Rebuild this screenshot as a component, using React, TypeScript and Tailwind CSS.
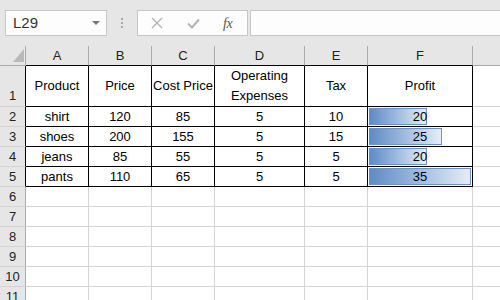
import React from "react";

const cols = [
  { key: "A", w: "w-[63px]" },
  { key: "B", w: "w-[63px]" },
  { key: "C", w: "w-[63px]" },
  { key: "D", w: "w-[90px]" },
  { key: "E", w: "w-[63px]" },
  { key: "F", w: "w-[105px]" },
];

const rows = [
  ["shirt", "120", "85", "5", "10", 20],
  ["shoes", "200", "155", "5", "15", 25],
  ["jeans", "85", "55", "5", "5", 20],
  ["pants", "110", "65", "5", "5", 35],
] as const;

const maxProfit = 35;

function FormulaBar() {
  return (
    <div className="h-[46px] bg-[#e6e6e6] flex items-start pt-[10px]">
      {/* name box */}
      <div className="ml-[5px] w-[102px] h-[26px] border border-[#c6c6c6] bg-[#fdfdfd] flex items-center justify-between pl-[7px] pr-[6px]">
        <span className="text-[15px] text-[#333]">L29</span>
        <span className="w-0 h-0 border-l-[4px] border-r-[4px] border-t-[4px] border-l-transparent border-r-transparent border-t-[#777]" />
      </div>
      {/* dots */}
      <div className="w-[30px] h-[26px] flex flex-col items-center justify-center gap-[2px]">
        <span className="w-[2px] h-[2px] bg-[#a8a8a8]" />
        <span className="w-[2px] h-[2px] bg-[#a8a8a8]" />
        <span className="w-[2px] h-[2px] bg-[#a8a8a8]" />
      </div>
      {/* buttons */}
      <div className="w-[111px] h-[26px] border border-[#c6c6c6] bg-[#fdfdfd] flex items-center">
        <svg width="12" height="12" viewBox="0 0 12 12" className="ml-[13px]">
          <path d="M1 1 L11 11 M11 1 L1 11" stroke="#b4b4b4" strokeWidth="1.3" fill="none" />
        </svg>
        <svg width="13" height="11" viewBox="0 0 13 11" className="ml-[24px]">
          <path d="M1 5.5 L5 9.5 L12 1.5" stroke="#b4b4b4" strokeWidth="2" fill="none" />
        </svg>
        <span className="ml-[23px] text-[14px] italic text-[#555] font-['Liberation_Serif',serif] tracking-[-0.5px]">fx</span>
      </div>
      {/* formula input */}
      <div className="ml-[2px] flex-1 h-[26px] border border-r-0 border-[#c6c6c6] bg-[#fdfdfd]" />
    </div>
  );
}

function HeaderRow() {
  return (
    <div className="flex h-[20px]">
      <div className="w-[26px] shrink-0 bg-[#e6e6e6] border-r border-b border-[#ababab] relative">
        <span className="absolute left-[13px] top-[3px] w-0 h-0 border-l-[10px] border-t-[12px] border-l-transparent border-t-transparent border-b-0 border-r-0" />
        <svg width="11" height="13" viewBox="0 0 11 13" className="absolute left-[13px] top-[3px]">
          <path d="M11 0 L11 13 L0 13 Z" fill="#b9b9b9" />
        </svg>
      </div>
      {cols.map((c) => (
        <div
          key={c.key}
          className={`${c.w} shrink-0 bg-[#e6e6e6] border-r border-r-[#ababab] border-b border-b-black flex items-center justify-center text-[#222] pt-[1px]`}
        >
          {c.key}
        </div>
      ))}
      <div className="flex-1 bg-[#e6e6e6] border-b border-[#ababab]" />
    </div>
  );
}

function RowHeader({ n, tall, black }: { n: number; tall?: boolean; black?: boolean }) {
  return (
    <div
      className={`w-[26px] shrink-0 bg-[#e6e6e6] border-b border-b-[#d4d4d4] border-r ${
        black ? "border-r-black" : "border-r-[#ababab]"
      } flex justify-center text-[#222] ${tall ? "items-end pb-[1px]" : "items-center"}`}
    >
      {n}
    </div>
  );
}

export default function App() {
  return (
    <div className="w-[500px] h-[300px] overflow-hidden bg-white font-['Liberation_Sans',Arial,sans-serif] text-[13px] text-black">
      <FormulaBar />
      <HeaderRow />

      {/* row 1: headers */}
      <div className="flex h-[41px]">
        <RowHeader n={1} tall black />
        {["Product", "Price", "Cost Price", "Operating Expenses", "Tax", "Profit"].map((t, i) => (
          <div
            key={t}
            className={`${cols[i].w} shrink-0 border-r border-b border-black flex items-center justify-center text-center leading-[20px] whitespace-nowrap overflow-hidden`}
          >
            {t === "Operating Expenses" ? (
              <span>
                Operating
                <br />
                Expenses
              </span>
            ) : (
              t
            )}
          </div>
        ))}
        <div className="flex-1 border-b border-[#d4d4d4]" />
      </div>

      {/* data rows */}
      {rows.map((r, ri) => (
        <div key={ri} className="flex h-[20px]">
          <RowHeader n={ri + 2} black />
          {r.slice(0, 5).map((v, ci) => (
            <div
              key={ci}
              className={`${cols[ci].w} shrink-0 border-r border-b border-black flex items-center justify-center`}
            >
              {v}
            </div>
          ))}
          <div className="w-[105px] shrink-0 border-r border-b border-black relative flex items-center justify-center">
            <div
              className="absolute left-[1px] top-[1px] bottom-[1px] border border-[#6b93c8] bg-gradient-to-r from-[#5f8bc5] to-[#e6edf7]"
              style={{ width: `${Math.round(((r[5] as number) / maxProfit) * 102)}px` }}
            />
            <span className="relative">{r[5]}</span>
          </div>
          <div className="flex-1 border-b border-[#d4d4d4]" />
        </div>
      ))}

      {/* empty rows */}
      {[6, 7, 8, 9, 10, 11].map((n) => (
        <div key={n} className="flex h-[20px]">
          <RowHeader n={n} />
          {cols.map((c) => (
            <div key={c.key} className={`${c.w} shrink-0 border-r border-b border-[#d4d4d4]`} />
          ))}
          <div className="flex-1 border-b border-[#d4d4d4]" />
        </div>
      ))}
    </div>
  );
}
